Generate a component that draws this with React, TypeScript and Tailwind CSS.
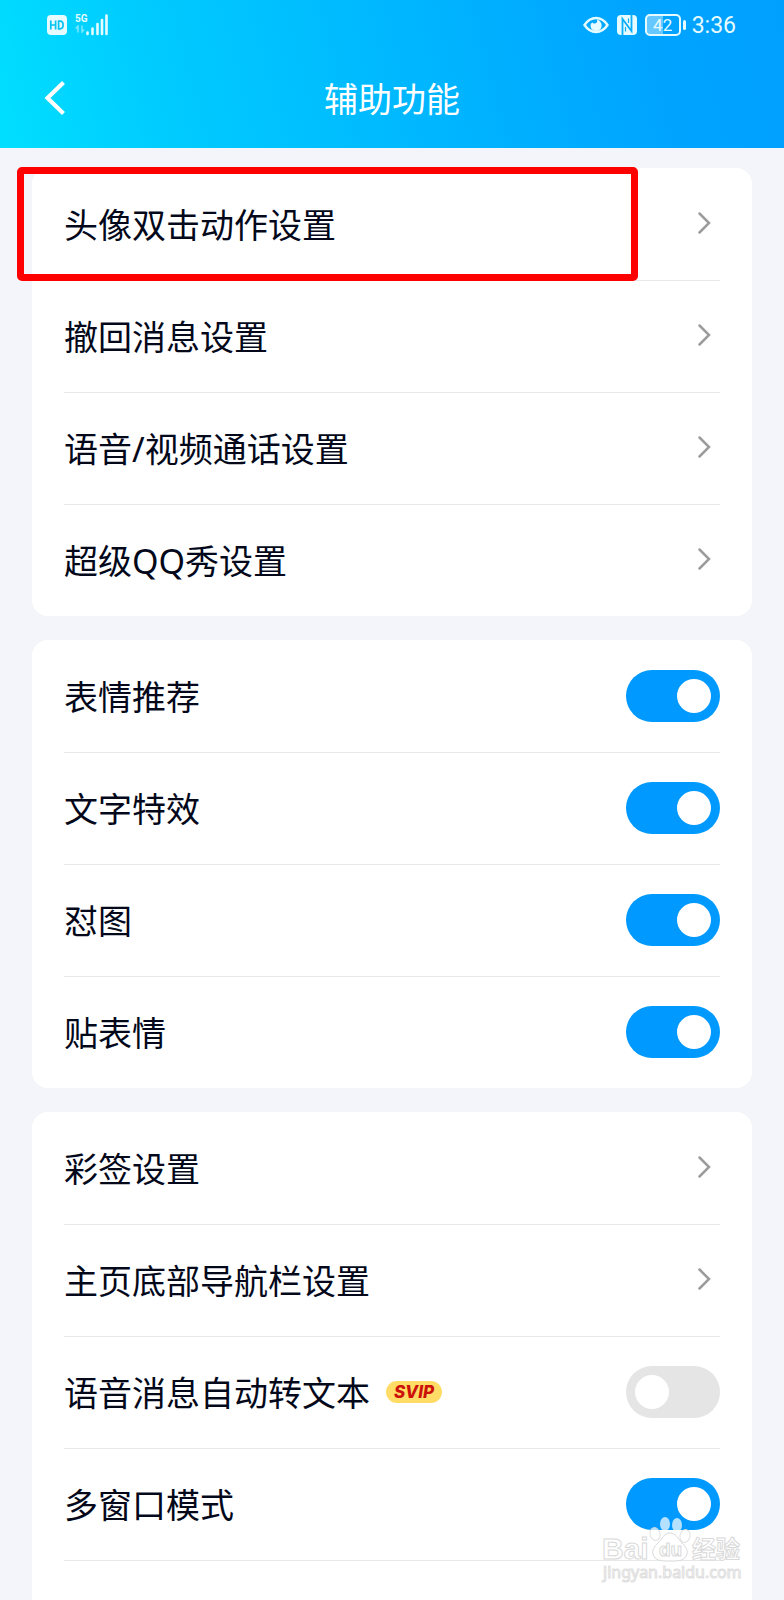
import { useState } from "react";
import type { ReactNode } from "react";

function StatusBar() {
  return (
    <div className="flex h-12 items-center justify-between pt-0.5 pr-12 pl-[47px] text-[#e6fbff]">
      <div className="flex items-center gap-2">
        <svg className="h-5 w-5" viewBox="0 0 20 20" role="img" aria-label="HD">
          <rect width="20" height="20" rx="4" fill="currentColor" />
          <path
            d="M3.8 5.4v9.2M8.6 5.4v9.2M3.8 10h4.8M11.6 6.2v7.6h1.5c2 0 3-1.5 3-3.8s-1-3.8-3-3.8z"
            fill="none"
            stroke="#06c2f2"
            strokeWidth="1.7"
          />
        </svg>
        <div className="flex items-end">
          <div className="flex h-6 w-[11px] flex-col">
            <span className="font-['Roboto',sans-serif] text-[10px] leading-3 font-bold">5G</span>
            <svg className="h-2 w-[10px] opacity-50" viewBox="0 0 10 8" aria-hidden="true">
              <path d="M3 7.5V1L.8 3.5M7 .5V7l2.2-2.5" fill="none" stroke="currentColor" strokeWidth="1.6" />
            </svg>
          </div>
          <svg className="h-6 w-[22px]" viewBox="0 0 22 24" aria-hidden="true">
            <path
              d="M1.5 19.500v1.500M6.5 15.500v5.500M11.500 11v10M16 7v14M20.500 2.500V21"
              stroke="currentColor"
              strokeWidth="2.600"
              strokeLinecap="round"
            />
          </svg>
        </div>
      </div>
      <div className="flex items-center">
        <svg className="mr-2 h-[18px] w-[26px]" viewBox="0 0 26 18" aria-hidden="true">
          <path
            d="M1.500 9C4.500 4.500 8.500 2 13 2s8.500 2.500 11.500 7c-3 4.500-7 7-11.500 7S4.500 13.500 1.500 9z"
            fill="none"
            stroke="currentColor"
            strokeWidth="2.400"
          />
          <path
            d="M14 3.500c.8 2.400-.6 4-2.400 4-1 0-1.600-.3-2.200-1C8 7.300 7.500 8.300 7.500 9.500A5.600 5.600 0 0 0 18.700 9.500c0-3-2-5.200-4.700-6z"
            fill="currentColor"
          />
        </svg>
        <svg className="mr-2 h-5 w-5" viewBox="0 0 20 20" aria-hidden="true">
          <rect width="20" height="20" rx="4" fill="currentColor" />
          <path
            d="M5.500 20V4L14.500 16V0"
            fill="none"
            stroke="#08aefa"
            strokeWidth="1.800"
          />
          <path d="M8.500 12v4.500M11.500 3.500V8" fill="none" stroke="#08aefa" strokeWidth="1.200" />
        </svg>
        <div className="flex h-[22px] w-9 items-center justify-center rounded-[5px] border-2 border-current bg-linear-to-r from-white/40 from-50% to-transparent to-50%">
          <span className="font-['Roboto',sans-serif] text-[17px] leading-4">42</span>
        </div>
        <div className="mr-1.5 ml-0.5 h-2.5 w-[3px] rounded-sm bg-current" />
        <time className="pt-0.5 font-['Roboto',sans-serif] text-[23px] leading-8">3:36</time>
      </div>
    </div>
  );
}

function Divider() {
  return <div className="mx-8 h-px bg-[#e7e8ea]" />;
}

function LinkRow({ label, highlighted }: { label: string; highlighted?: boolean }) {
  return (
    <div className="relative">
      <Divider />
      <button type="button" className="flex h-[111px] w-full items-center justify-between pr-10 pb-px pl-8 text-left">
        <span className="pt-px">{label}</span>
        <svg className="mb-[3px] h-6 w-4" viewBox="0 0 16 24" fill="none" aria-hidden="true">
          <path d="M3.500 2.500 13 12 3.500 21.500" stroke="#9c9c9e" strokeWidth="2.500" strokeLinecap="round" />
        </svg>
      </button>
      {highlighted && (
        <div className="pointer-events-none absolute -top-px right-[114px] -bottom-px -left-[15px] z-10 rounded-[5px] border-[7px] border-[#ff0000]" />
      )}
    </div>
  );
}

function SwitchRow({ label, initial, badge }: { label: string; initial: boolean; badge?: ReactNode }) {
  const [on, setOn] = useState(initial);
  return (
    <div>
      <Divider />
      <label className="flex h-[111px] items-center justify-between px-8 pb-px">
        <span className="flex items-center gap-4">
          <span className="pt-px">{label}</span>
          {badge}
        </span>
        <input
          type="checkbox"
          role="switch"
          checked={on}
          onChange={(e) => setOn(e.target.checked)}
          className="flex h-[52px] w-[94px] shrink-0 appearance-none items-center rounded-full bg-[#e5e5e5] px-[9px] before:h-[34px] before:w-[34px] before:rounded-full before:bg-white checked:justify-end checked:bg-[#0099ff]"
        />
      </label>
    </div>
  );
}

function Card({ children, last }: { children: ReactNode; last?: boolean }) {
  return (
    <section
      className={
        last
          ? "flex-1 rounded-t-2xl bg-white pb-10 [&>*:first-child>div:first-child]:bg-transparent"
          : "rounded-2xl bg-white [&>*:first-child>div:first-child]:bg-transparent"
      }
    >
      {children}
    </section>
  );
}

function SvipBadge() {
  return (
    <span className="flex h-[22px] w-14 items-center justify-center rounded-full bg-[#ffdc66] font-['Inter',sans-serif] text-[17px] leading-[22px] font-extrabold text-[#cc1208] italic">
      SVIP
    </span>
  );
}

function Watermark() {
  return (
    <svg
      className="pointer-events-none absolute right-8 bottom-3 h-[76px] w-[152px]"
      viewBox="0 0 152 76"
      role="img"
      aria-label="Baidu 经验"
      fill="#ffffff"
      stroke="#d9d9d9"
    >
      <text x="2" y="46" fontFamily="Liberation Sans" fontSize="30" fontWeight="700" strokeWidth="1">
        Bai
      </text>
      <g fillOpacity="0.7" strokeOpacity="0.8">
        <ellipse cx="55" cy="21" rx="5" ry="6.500" transform="rotate(-15 55 21)" />
        <ellipse cx="65" cy="11" rx="5" ry="7" stroke="none" />
        <ellipse cx="77" cy="12" rx="5" ry="7" stroke="none" />
        <ellipse cx="85" cy="23" rx="5" ry="6.500" transform="rotate(15 85 23)" />
      </g>
      <path d="M70 20c-6 0-8 6-12 10-4 4-6 7-5 11 2 7 8 7 17 7s15 0 17-7c1-4-1-7-5-11-4-4-6-10-12-10z" />
      <text x="59" y="43" fontFamily="Liberation Sans" fontSize="19" fontWeight="700" strokeWidth="1">
        du
      </text>
      <text x="92" y="45" fontFamily="Noto Sans CJK SC" fontSize="24" fontWeight="700" strokeWidth="1">
        经验
      </text>
      <text x="3" y="65" fontFamily="Noto Sans" fontSize="16" fontWeight="400" stroke="#dedede" strokeWidth="1">
        jingyan.baidu.com
      </text>
    </svg>
  );
}

export default function App() {
  return (
    <div className="relative flex min-h-screen flex-col bg-[#f4f5fa] font-['Noto_Sans','Noto_Sans_CJK_SC',sans-serif] text-[34px] leading-[50px] text-[#03081a]">
      <header className="bg-[linear-gradient(75deg,#00dfff_0%,#00ccff_20%,#00b7ff_52%,#00a4ff_82%,#00a0ff_100%)] text-white">
        <StatusBar />
        <div className="grid h-[100px] grid-cols-[1fr_auto_1fr] items-center">
          <button type="button" aria-label="返回" className="ml-10 w-8">
            <svg className="h-10 w-8" viewBox="0 0 32 40" fill="none" aria-hidden="true">
              <path d="M23.500 4.500 7.500 20 23.500 35.500" stroke="currentColor" strokeWidth="4.200" />
            </svg>
          </button>
          <h1 className="pt-0.5">辅助功能</h1>
        </div>
      </header>
      <main className="flex flex-1 flex-col gap-6 px-8 pt-5">
        <Card>
          <LinkRow label="头像双击动作设置" highlighted />
          <LinkRow label="撤回消息设置" />
          <LinkRow label="语音/视频通话设置" />
          <LinkRow label="超级QQ秀设置" />
        </Card>
        <Card>
          <SwitchRow label="表情推荐" initial />
          <SwitchRow label="文字特效" initial />
          <SwitchRow label="怼图" initial />
          <SwitchRow label="贴表情" initial />
        </Card>
        <Card last>
          <LinkRow label="彩签设置" />
          <LinkRow label="主页底部导航栏设置" />
          <SwitchRow label="语音消息自动转文本" initial={false} badge={<SvipBadge />} />
          <SwitchRow label="多窗口模式" initial />
          <Divider />
        </Card>
      </main>
      <Watermark />
    </div>
  );
}
